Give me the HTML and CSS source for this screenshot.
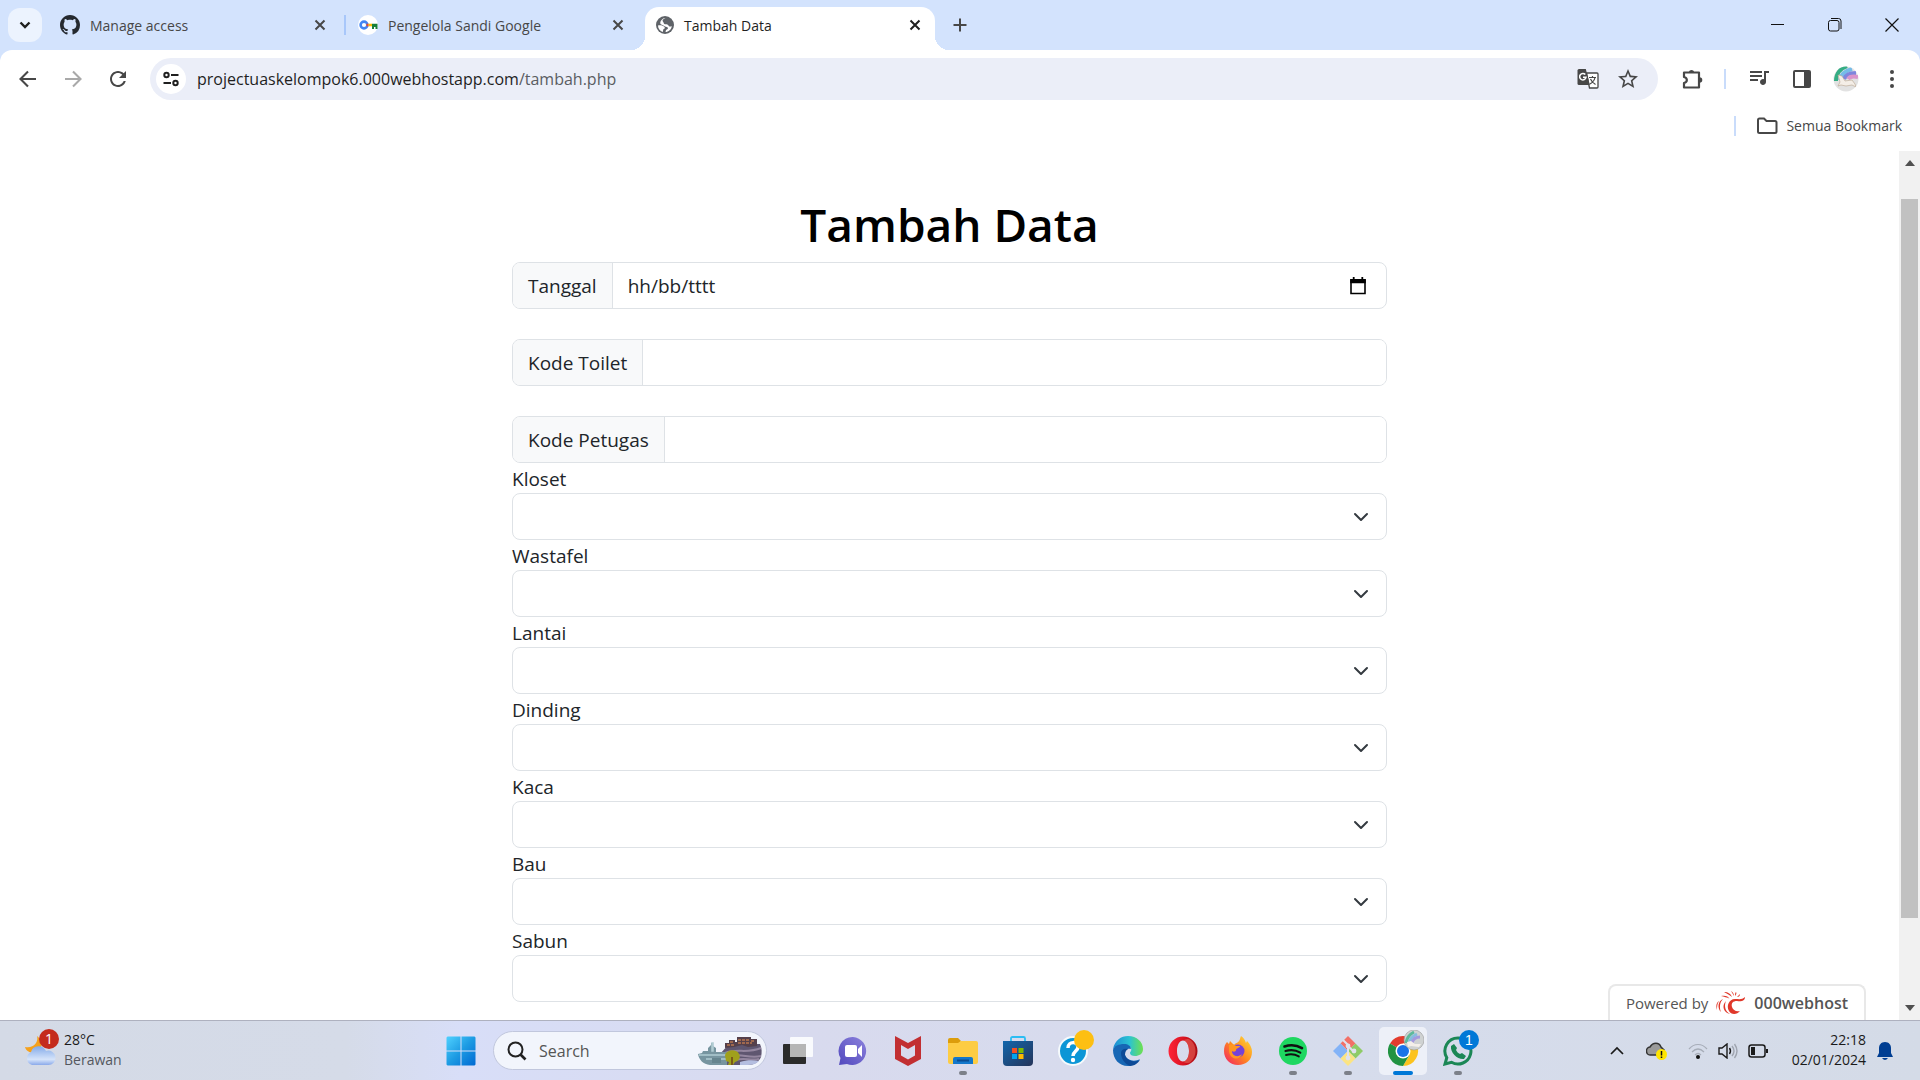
FILE: index.html
```html
<!DOCTYPE html>
<html lang="id">
<head>
<meta charset="utf-8">
<title>Tambah Data</title>
<link rel="stylesheet" href="styles.css">
</head>
<body>
<header class="browser">
  <div class="tabstrip">
    <button class="tab-search" aria-label="Cari tab"><svg width="12" height="8" viewBox="0 0 12 8"><path d="M1.500 1.500L6 6l4.500-4.500" fill="none" stroke="#1f1f1f" stroke-width="2.400"/></svg></button>
    <div class="tab tab-first">
      <svg width="20" height="20" viewBox="0 0 16 16"><path fill="#24292f" d="M8 0C3.580 0 0 3.580 0 8c0 3.540 2.290 6.530 5.470 7.590.4.070.55-.17.55-.38 0-.19-.01-.82-.01-1.490-2.010.37-2.530-.49-2.690-.94-.09-.23-.48-.94-.82-1.130-.28-.15-.68-.52-.01-.53.63-.01 1.080.58 1.230.82.72 1.210 1.870.87 2.330.66.070-.52.28-.87.51-1.070-1.780-.2-3.640-.89-3.640-3.950 0-.87.31-1.590.82-2.150-.08-.2-.36-1.020.08-2.120 0 0 .67-.21 2.200.82.64-.18 1.320-.27 2-.27s1.360.09 2 .27c1.530-1.040 2.200-.82 2.200-.82.44 1.100.16 1.920.08 2.120.51.56.82 1.270.82 2.150 0 3.070-1.870 3.750-3.650 3.950.29.25.54.73.54 1.480 0 1.070-.01 1.930-.01 2.200 0 .21.15.46.55.38A8.010 8.010 0 0 0 16 8c0-4.420-3.580-8-8-8z"/></svg>
      <span class="tab-title">Manage access</span>
      <button class="tab-close" aria-label="Tutup"><svg width="12" height="12" viewBox="0 0 12 12"><path d="M1.500 1.500l9 9M10.500 1.500l-9 9" stroke="#474747" stroke-width="2"/></svg></button>
    </div>
    <span class="tab-divider"></span>
    <div class="tab tab-second">
      <svg width="20" height="20" viewBox="0 0 20 20"><circle cx="10" cy="10" r="10" fill="#fff"/><circle cx="6" cy="10" r="3.400" fill="none" stroke="#4285f4" stroke-width="2.600"/><path d="M8.500 8.700h2v2.600h-2z" fill="#ea4335"/><path d="M10.500 8.700H14v2.600h-3.500z" fill="#fbbc04"/><path d="M14 8.700h5.500V14H17.500v-2H16v2h-2z" fill="#188038"/></svg>
      <span class="tab-title">Pengelola Sandi Google</span>
      <button class="tab-close" aria-label="Tutup"><svg width="12" height="12" viewBox="0 0 12 12"><path d="M1.500 1.500l9 9M10.500 1.500l-9 9" stroke="#474747" stroke-width="2"/></svg></button>
    </div>
    <div class="tab tab-active">
      <svg width="18" height="18" viewBox="0 0 18 18"><circle cx="9" cy="9" r="9" fill="#5f6368"/><path d="M2 9.500c2.500-.6 5 0 6.500 1.400.8.900.2 1.700-.8 2.100-.8.500-.4 2-1 2.900C4 15 2 12.700 2 9.500zM9.500 2c-.8.700-2.700 1.100-2.900 2.300-.2 1.300 1 1.500 1.100 2.600C7.800 8 9 8.500 10.200 8.300c1.700-.2 2 1.200 2.800 1.900.9.700 2.100.3 2.800-.2C15.500 13.500 12.500 16 9.500 16l.5-2c1.300-.5 2.500-1.300 1.700-2.500-.7-1-3.200-.6-3.900-1.700C7 8.700 4.500 9 4.300 7.500 4.200 5 6 2.200 9.500 2z" fill="#fff"/></svg>
      <span class="tab-title">Tambah Data</span>
      <button class="tab-close" aria-label="Tutup"><svg width="12" height="12" viewBox="0 0 12 12"><path d="M1.500 1.500l9 9M10.500 1.500l-9 9" stroke="#1f1f1f" stroke-width="2"/></svg></button>
    </div>
    <button class="new-tab" aria-label="Tab baru"><svg width="14" height="14" viewBox="0 0 14 14"><path d="M7 .5v13M.5 7h13" stroke="#474747" stroke-width="2"/></svg></button>
    <div class="window-controls">
      <button aria-label="Minimalkan"><svg width="14" height="14" viewBox="0 0 14 14"><path d="M0 6.500h13" stroke="#111"/></svg></button>
      <button aria-label="Pulihkan"><svg width="14" height="14" viewBox="0 0 14 14"><rect x=".5" y="2.500" width="10.500" height="10.500" rx="2" fill="none" stroke="#111"/><path d="M3 .5h7.500a2.500 2.500 0 0 1 2.500 2.500v8" fill="none" stroke="#111"/></svg></button>
      <button aria-label="Tutup jendela"><svg width="14" height="14" viewBox="0 0 14 14"><path d="M.5.5l13 13M13.500.5l-13 13" stroke="#111" stroke-width="1.200"/></svg></button>
    </div>
  </div>
  <div class="toolbar">
    <div class="nav-buttons">
      <button aria-label="Kembali"><svg width="24" height="24" viewBox="0 0 24 24"><path d="M20 12H5M12 4.500L4.500 12l7.500 7.500" fill="none" stroke="#474747" stroke-width="2.100"/></svg></button>
      <button aria-label="Maju"><svg width="24" height="24" viewBox="0 0 24 24"><path d="M4 12h15M12 4.500l7.500 7.500-7.500 7.500" fill="none" stroke="#a9a9a9" stroke-width="2.100"/></svg></button>
      <button aria-label="Muat ulang"><svg width="24" height="24" viewBox="0 0 24 24"><path fill="#474747" d="M17.650 6.350C16.200 4.900 14.210 4 12 4c-4.420 0-7.990 3.580-7.990 8s3.570 8 7.990 8c3.730 0 6.840-2.550 7.730-6h-2.080c-.82 2.330-3.040 4-5.650 4-3.310 0-6-2.690-6-6s2.690-6 6-6c1.660 0 3.140.69 4.220 1.780L13 11h7V4l-2.350 2.350z"/></svg></button>
    </div>
    <div class="omnibox">
      <button class="site-info" aria-label="Info situs"><svg width="16" height="16" viewBox="0 0 16 16" fill="none" stroke="#1f1f1f" stroke-width="2"><circle cx="3.500" cy="4" r="2.200"/><path d="M8 4h7.500M.5 12H8"/><circle cx="12.500" cy="12" r="2.200"/></svg></button>
      <span class="url">projectuaskelompok6.000webhostapp.com<span class="url-path">/tambah.php</span></span>
      <button aria-label="Terjemahkan"><svg width="22" height="22" viewBox="0 0 22 22"><path d="M9.500 5H20q1 0 1 1v13q0 1-1 1h-7.500z" fill="#fff" stroke="#474747" stroke-width="1.300"/><path d="M12 9.500h7M15.500 8v1.500M18 9.500c-.6 3-2.500 5-5 6.500M13.500 11c1 2.400 2.600 4 5 5.500" fill="none" stroke="#474747" stroke-width="1.200"/><path d="M2 1h6.800l4 16H2q-1.500 0-1.500-1.500v-13Q.5 1 2 1z" fill="#474747"/><path d="M8.300 6.600A3.200 3.200 0 1 0 9 9.300H6" fill="none" stroke="#fff" stroke-width="1.500"/></svg></button>
      <button aria-label="Bookmark"><svg width="24" height="24" viewBox="0 0 24 24"><path fill="#474747" d="M22 9.240l-7.190-.62L12 2 9.190 8.630 2 9.240l5.460 4.730L5.820 21 12 17.270 18.180 21l-1.630-7.030L22 9.240zM12 15.400l-3.760 2.270 1-4.280-3.320-2.880 4.380-.38L12 6.100l1.710 4.040 4.380.38-3.320 2.880 1 4.280L12 15.400z"/></svg></button>
    </div>
    <button class="extensions" aria-label="Ekstensi"><svg width="24" height="24" viewBox="0 0 24 24"><path d="M4 5.500h15v15H4v-4.500c3.800-1 3.800-5 0-6z" fill="none" stroke="#474747" stroke-width="2.200" stroke-linejoin="round"/><path d="M8.800 5a2.800 2.800 0 0 1 5.400 0zM19.500 10.200a2.800 2.800 0 0 1 0 5.600z" fill="#474747"/></svg></button>
    <span class="toolbar-divider"></span>
    <div class="toolbar-actions">
      <button aria-label="Kontrol media"><svg width="24" height="24" viewBox="0 0 24 24"><path fill="#474747" d="M15 4H3v2h12V4zm0 4H3v2h12V8zM3 14h8v-2H3v2zM17 4v8.180c-.31-.11-.65-.18-1-.18-1.660 0-3 1.340-3 3s1.340 3 3 3 3-1.340 3-3V6h3V4h-5z"/></svg></button>
      <button aria-label="Panel samping"><svg width="20" height="20" viewBox="0 0 20 20"><rect x="2" y="2" width="16" height="16" rx="1" fill="none" stroke="#474747" stroke-width="2"/><path d="M12 2h6v16h-6z" fill="#474747"/></svg></button>
      <button aria-label="Profil"><svg width="26" height="26" viewBox="0 0 26 26"><defs><clipPath id="av"><circle cx="13" cy="13" r="12.500"/></clipPath></defs><g clip-path="url(#av)"><path d="M0 0h26v26H0z" fill="#e2e2e2"/><g fill="none" stroke-width="4"><path d="M3 15C3 7 8 2 14 0" stroke="#35ad84"/><path d="M7 14c1-6 5-9 12-11" stroke="#76bce8"/><path d="M11 13c2-5 6-6 12-6" stroke="#7e86dd"/><path d="M15 13c2-3 5-3 10-2" stroke="#d995cb"/></g><path d="M5 9l4 1 3 5 7-1 3 4 1 3-4-2-6 1-5-1-3 1 2-4z" fill="#f4eee7" stroke="#b9a48f" stroke-width=".6"/></g></svg></button>
      <button aria-label="Menu"><svg width="24" height="24" viewBox="0 0 24 24" fill="#474747"><circle cx="12" cy="5" r="2"/><circle cx="12" cy="12" r="2"/><circle cx="12" cy="19" r="2"/></svg></button>
    </div>
  </div>
  <nav class="bookmarks">
    <span class="toolbar-divider"></span>
    <a class="bookmark" href="#"><svg width="22" height="18" viewBox="0 0 22 18"><path d="M2 3q0-1.500 1.500-1.500H8L10.500 4h8.500q1.500 0 1.500 1.500v9q0 1.500-1.500 1.500H3.500Q2 16 2 14.500z" fill="none" stroke="#474747" stroke-width="2"/></svg>Semua Bookmark</a>
  </nav>
</header>

<div class="viewport">
  <main class="page">
    <form class="entry-form">
      <h1>Tambah Data</h1>
      <div class="input-group">
        <label for="tanggal">Tanggal</label>
        <input id="tanggal" type="text" value="hh/bb/tttt">
        <button type="button" class="calendar" aria-label="Pilih tanggal"><svg width="20" height="20" viewBox="0 0 20 20"><path d="M3 4h14v13.500H3z" fill="none" stroke="#000" stroke-width="1.600"/><path d="M2.200 3h15.600v4.200H2.200zM4.800 1h1.800v3H4.800zM13.400 1h1.800v3h-1.800z"/></svg></button>
      </div>
      <div class="input-group">
        <label for="toilet">Kode Toilet</label>
        <input id="toilet" type="text">
      </div>
      <div class="input-group input-group-last">
        <label for="petugas">Kode Petugas</label>
        <input id="petugas" type="text">
      </div>
      <div class="field"><label for="kloset">Kloset</label><select id="kloset"></select></div>
      <div class="field"><label for="wastafel">Wastafel</label><select id="wastafel"></select></div>
      <div class="field"><label for="lantai">Lantai</label><select id="lantai"></select></div>
      <div class="field"><label for="dinding">Dinding</label><select id="dinding"></select></div>
      <div class="field"><label for="kaca">Kaca</label><select id="kaca"></select></div>
      <div class="field"><label for="bau">Bau</label><select id="bau"></select></div>
      <div class="field"><label for="sabun">Sabun</label><select id="sabun"></select></div>
    </form>
    <a class="powered" href="#">
      <span>Powered by</span>
      <svg width="30" height="26" viewBox="0 0 30 26" fill="#e0382a"><path d="M29 7c0 4-4 5-8 4-4 0-6 2-5 6 1 3 4 5 8 4-3 4-9 4-11 0-3-5 0-12 6-12 4 0 7 1 10-2z"/><path d="M10 11c-2 5-1 10 4 13-6-1-9-8-4-13zM7 9c-3 3-4 8-2 13C1 18 2 11 7 9zM3 11c-2 3-2 6-2 9-1-4-1-7 2-9zM5 6c4-1 7 0 9 3-3-2-6-2-9-3zM8 2c4 0 7 2 8 5-2-2-5-3-8-5zM15 1c2 1 3 3 3 5-1-2-2-3-3-5zM20 2c1 1 0 3-1 4 0-2 0-3 1-4zM24 4c0 2-1 3-3 3 1-1 2-2 3-3z"/></svg>
      <strong>000webhost</strong>
    </a>
  </main>
  <div class="scrollbar">
    <svg width="10" height="6" viewBox="0 0 10 6"><path d="M5 0l5 6H0z" fill="#505050"/></svg>
    <div class="track"><div class="thumb"></div></div>
    <svg width="10" height="6" viewBox="0 0 10 6"><path d="M5 6l5-6H0z" fill="#505050"/></svg>
  </div>
</div>

<footer class="taskbar">
  <div class="weather">
    <svg width="36" height="38" viewBox="0 0 36 38"><defs><linearGradient id="cl" x1="0" y1="0" x2="0" y2="1"><stop offset="0" stop-color="#82a9e8"/><stop offset=".7" stop-color="#d6e4fa"/><stop offset="1" stop-color="#8aa9ea"/></linearGradient></defs><path d="M13 7c2 6-4 13-12 11 1 5 8 7 12 5 6-3 6-12 0-16z" fill="#f5a11c"/><path d="M8 36a7 7 0 0 1-1-13 8 8 0 0 1 15-1 7.200 7.200 0 1 1 2 14z" fill="url(#cl)"/><circle cx="25" cy="10" r="10" fill="#c42b1c"/><text x="25" y="15" class="badge-text">1</text></svg>
    <div class="weather-text"><span>28°C</span><span class="muted">Berawan</span></div>
  </div>
  <div class="apps">
    <button class="app" aria-label="Mulai"><svg width="30" height="30" viewBox="0 0 30 30"><defs><linearGradient id="wn" x1="0" y1="0" x2="1" y2="1"><stop offset="0" stop-color="#4fd1ff"/><stop offset=".5" stop-color="#1d9be3"/><stop offset="1" stop-color="#0069d2"/></linearGradient></defs><path fill="url(#wn)" d="M1.500.5h13v14h-14v-13zM15.500.5h13l1 1v13h-14zM.5 15.500h14v14h-13l-1-1zM15.500 15.500h14v13l-1 1h-13z"/></svg></button>
    <div class="search">
      <svg width="20" height="20" viewBox="0 0 20 20" fill="none" stroke="#222"><circle cx="8.500" cy="8.500" r="7" stroke-width="2"/><path d="M13.500 13.500l5 5" stroke-width="2.600"/></svg>
      <input type="text" aria-label="Search" placeholder="Search">
      <svg width="64" height="30" viewBox="0 0 64 30"><path d="M19 20c5-3 8-9 14-12h29c2 4 2 9 1 13-2 5-7 8-13 8H28z" fill="#5f5670"/><path d="M27 17c12-5 22 1 36-5M30 21c12-5 20 2 33-1M38 24c8-3 14 1 23-1" stroke="#94869f" fill="none" stroke-width="2"/><path d="M42 26c6-2 13-2 19-1-3 3-7 4-11 4h-8z" fill="#b4bee0"/><path d="M27 12V7h4V4h6v2h2V1h14v2h6v7l-9 1-6-2-8 2z" fill="#55404b"/><path d="M29 9h8M40 4h11M40 7h14M53 5h4M32 6h4" stroke="#b87650" stroke-width="1.600" stroke-dasharray="3 1"/><path d="M0 18l4-1 1-2h5v-3l3-3V7h2v3l3 2v4h11v13H12C5 28 1 24 0 18z" fill="#7795a0"/><path d="M14 7h1v8h-1zM1 19h27M8 23h20" stroke="#b0cbd2" fill="#b0cbd2" stroke-width="1.600"/><path d="M14 22h9v5h-9z" fill="#66858f"/><path d="M27 19c2-6 12-6 14-1 2 3 0 7-4 8l-2 3h-5l1-3-3-1z" fill="#a0a01c"/><path d="M34 21v8" stroke="#7a5a18" stroke-width="2"/></svg>
    </div>
    <button class="app" aria-label="Tampilan tugas"><svg width="30" height="30" viewBox="0 0 30 30"><rect y="8" width="23" height="20" rx="1" fill="#2b2b2b"/><rect x="7" y="1" width="23" height="20" rx="1" fill="#fff" opacity=".85"/><path d="M7 8h16v13H7z" fill="#b5b5b5"/></svg></button>
    <button class="app" aria-label="Obrolan"><svg width="30" height="30" viewBox="0 0 30 30"><defs><linearGradient id="ch" x1="0" y1="1" x2="1" y2="0"><stop offset="0" stop-color="#5148be"/><stop offset="1" stop-color="#8c82dc"/></linearGradient></defs><path d="M15 1a14 14 0 1 1-6 27L1 29l1.500-7A14 14 0 0 1 15 1z" fill="url(#ch)"/><rect x="7" y="9" width="12" height="12" rx="2" fill="#fff"/><path d="M20 13l4-4v12l-4-4z" fill="#fff"/></svg></button>
    <button class="app" aria-label="McAfee"><svg width="30" height="30" viewBox="0 0 30 30"><path fill="#c22f32" d="M2 0l13 7 13-7v23l-13 7-13-7zm6 9v10.500l7 4 7-4V9l-7 4z"/></svg></button>
    <button class="app running" aria-label="File Explorer"><svg width="30" height="30" viewBox="0 0 30 30"><path d="M0 4q0-2 2-2h8l3 3-3 4H0z" fill="#dc9d0b"/><path d="M0 7h10l3-2h15q2 0 2 2v19q0 2-2 2H2q-2 0-2-2z" fill="#fdcc43"/><path d="M5 28v-5q0-2 2-2h16q2 0 2 2v5z" fill="#1377cb"/><path d="M9 24.500h12" stroke="#0a4c91" stroke-width="2"/></svg></button>
    <button class="app" aria-label="Microsoft Store"><svg width="30" height="30" viewBox="0 0 30 30"><defs><linearGradient id="st" x1="0" y1="0" x2="1" y2="1"><stop offset="0" stop-color="#1266ac"/><stop offset="1" stop-color="#253459"/></linearGradient></defs><path d="M8 7V2.500Q8 1 9.500 1h11Q22 1 22 2.500V7" fill="none" stroke="#2cbdf3" stroke-width="1.800"/><path d="M0 5h30v21q0 4-4 4H4q-4 0-4-4z" fill="url(#st)"/><path d="M9 12h5v5H9z" fill="#f25022"/><path d="M15.500 12h5v5h-5z" fill="#7fba00"/><path d="M9 18h5v5H9z" fill="#00a4ef"/><path d="M15.500 18h5v5h-5z" fill="#ffb900"/></svg></button>
    <button class="app" aria-label="Bantuan"><svg width="36" height="36" viewBox="0 0 36 36"><circle cx="15" cy="21" r="14" fill="#0c96d6" stroke="#f5fafc" stroke-width="2"/><path d="M10 18c0-7 10-7 10-1 0 4-5 4-5 9" fill="none" stroke="#fff" stroke-width="3.500"/><circle cx="15" cy="30" r="2.200" fill="#fff"/><circle cx="26" cy="10" r="10" fill="#fdbf12"/></svg></button>
    <button class="app" aria-label="Edge"><svg width="30" height="30" viewBox="0 0 30 30"><defs><linearGradient id="e1"><stop offset="0" stop-color="#1d8bd4"/><stop offset=".55" stop-color="#2bc3d2"/><stop offset="1" stop-color="#6fe14e"/></linearGradient></defs><path d="M0 13C2 4 8 0 15 0c9 0 15 6 15 13 0 5-4 7-8 7-3 0-5-1-5-3 0-1 2-2 1-5-1-2-4-3-7-3-5 0-9 2-11 4z" fill="url(#e1)"/><path d="M0 14c1-4 6-6 11-6 4 0 7 2 7 5-4-1-7 2-6 6 2 6 10 7 15 4-3 5-8 7-12 7C6 30 0 23 0 14z" fill="#1767b5"/><path d="M8 17c0 6 4 11 9 13 4 0 8-3 10-6-5 3-13 1-15-5 0-3 1-5 3-6-4-1-7 1-7 4z" fill="#0c4a97"/></svg></button>
    <button class="app" aria-label="Opera"><svg width="30" height="30" viewBox="0 0 30 30"><defs><linearGradient id="op"><stop offset="0" stop-color="#ff2338"/><stop offset=".6" stop-color="#d3121f"/><stop offset="1" stop-color="#a80d14"/></linearGradient></defs><path fill-rule="evenodd" fill="url(#op)" d="M15 .5a14.500 14.500 0 1 1 0 29 14.500 14.500 0 0 1 0-29zm0 4C11.500 4.500 9 9 9 15s2.500 10.500 6 10.500S21 21 21 15 18.500 4.500 15 4.500z"/><path d="M15 4.500c3-2 6-2 8 0 6 5 6 16 0 21-2 2-5 2-8 0 3.500 0 6-4.500 6-10.500S18.500 4.500 15 4.500z" fill="#e0574f" opacity=".7"/></svg></button>
    <button class="app" aria-label="Firefox"><svg width="30" height="30" viewBox="0 0 30 30"><defs><linearGradient id="ff" x1="1" y1="0" x2="0" y2="1"><stop offset="0" stop-color="#ffe13a"/><stop offset=".5" stop-color="#ff8a1e"/><stop offset="1" stop-color="#f2196b"/></linearGradient></defs><path d="M18 0c3 2 4 4 5 7l1-2c4 4 5 8 5 11 0 8-6 13-14 13S1 23 1 15c0-4 1-7 3-9l2 2 1-3 4 4c1-2 4-2 5-4 1-1 1-3 2-5z" fill="url(#ff)"/><circle cx="15" cy="15" r="6.500" fill="#7542d8"/><path d="M6 9c4-1 6 0 7 1h4c0 2-4 2-4 4 0 2-3 2-4 1 0 5 6 7 10 3-2 7-13 6-13-4z" fill="#ff9720"/></svg></button>
    <button class="app running" aria-label="Spotify"><svg width="30" height="30" viewBox="0 0 30 30"><circle cx="15" cy="15" r="14" fill="#1ed760"/><g fill="none" stroke="#111" stroke-linecap="round"><path d="M6.500 10.500c6-2 12.500-1.300 17.500 1.700" stroke-width="2.600"/><path d="M7.500 15c5-1.500 10.500-1 14.800 1.600" stroke-width="2.200"/><path d="M8 19c4.500-1.200 9-.8 12.800 1.400" stroke-width="1.900"/></g></svg></button>
    <button class="app running" aria-label="Git"><svg width="30" height="30" viewBox="0 0 30 30"><path d="M15 0l7.500 7.500L15 15 7.500 7.500z" fill="#f27067"/><path d="M7.500 7.500L15 15l-7.500 7.500L0 15z" fill="#83b3f7"/><path d="M22.500 7.500L30 15l-7.500 7.500L15 15z" fill="#8ecb67"/><path d="M15 15l7.500 7.500L15 30l-7.500-7.500z" fill="#fbe483"/><path d="M10 4l5 5v14M15 10l5 5" fill="none" stroke="#dfe2ee" stroke-width="2"/><g fill="#dfe2ee"><circle cx="15" cy="10" r="2.400"/><circle cx="21" cy="15" r="2.400"/><circle cx="15" cy="22" r="2.400"/></g></svg></button>
    <button class="app running active" aria-label="Chrome"><svg width="36" height="36" viewBox="0 0 36 36"><path d="M15 21L2 13.500A15 15 0 0 1 28 13.500H15z" fill="#e33b2e"/><path d="M15 21V13.500h13A15 15 0 0 1 15 36l6.500-11z" fill="#fcc31e"/><path d="M15 21l6.500 3.800L15 36A15 15 0 0 1 2 13.500z" fill="#229342"/><circle cx="15" cy="21" r="7.500" fill="#fff"/><circle cx="15" cy="21" r="6" fill="#1a73e8"/><circle cx="26" cy="10" r="10" fill="#cfd2d2" stroke="#999" stroke-width=".6"/><g fill="none" stroke-width="3"><path d="M18 13c1-6 4-9 8-11" stroke="#5cb99b"/><path d="M21 13c1-5 4-7 8-9" stroke="#86bce0"/><path d="M24 13c1-4 4-6 8-6" stroke="#a49add"/></g><path d="M19 12l4-1 4 3h6l-2 3-8-1-3 1z" fill="#f4efe9"/></svg></button>
    <button class="app running" aria-label="WhatsApp"><svg width="36" height="36" viewBox="0 0 36 36"><path d="M15 8a13 13 0 1 1-6.500 24.300L2 34l1.800-6.300A13 13 0 0 1 15 8z" fill="none" stroke="#1b8755" stroke-width="3"/><path d="M8 16l3-2 3 4-1 2c1 2 2 3 4 4l2-1 4 3-2 3C15 30 7 23 8 16z" fill="#1b8755"/><circle cx="26" cy="10" r="10" fill="#0078d7"/><text x="26" y="15" class="badge-text">1</text></svg></button>
  </div>
  <div class="tray">
    <button aria-label="Ikon tersembunyi"><svg width="14" height="9" viewBox="0 0 14 9"><path d="M1 8l6-6 6 6" fill="none" stroke="#1a1a1a" stroke-width="1.700"/></svg></button>
    <button aria-label="OneDrive"><svg width="22" height="20" viewBox="0 0 22 20"><path d="M5 14a4 4 0 0 1-1-8C7 1 13 1 15 6l3 3-5 5z" fill="#9a9a9a" stroke="#333" stroke-width="1.500"/><circle cx="15.500" cy="13.500" r="5.500" fill="#ffe500"/><path d="M15.500 10v4.500M15.500 15.500V17" stroke="#111" stroke-width="1.500"/></svg></button>
    <div class="status">
      <svg width="20" height="16" viewBox="0 0 20 16" fill="none" stroke="#a7adb8" stroke-width="1.200"><path d="M1 6c5-6 13-6 18 0M4 9c4-4 8-4 12 0M7 12c2-2 4-2 6 0"/><circle cx="10" cy="14" r="2" fill="#111" stroke="none"/></svg>
      <svg width="20" height="16" viewBox="0 0 20 16" fill="none" stroke="#1a1a1a" stroke-width="1.400"><path d="M1 5h3l5-4v14l-5-4H1z"/><path d="M11.500 5q2 3 0 6"/><path d="M14 3q4 5 0 10M16.500 1q5 7 0 14" stroke="#a0a5b0"/></svg>
      <svg width="20" height="14" viewBox="0 0 20 14"><rect x="1" y="1" width="16" height="12" rx="2.500" fill="none" stroke="#1a1a1a" stroke-width="1.500"/><path d="M3 3h4v8H3zM18 5h2v4h-2z" fill="#1a1a1a"/></svg>
    </div>
    <div class="clock"><span>22:18</span><span>02/01/2024</span></div>
    <button aria-label="Notifikasi"><svg width="18" height="20" viewBox="0 0 18 20"><path d="M9 1c4 0 6 3 6 6v5l2 4H1l2-4V7c0-3 2-6 6-6zM6 17h6q-3 4-6 0z" fill="#003e92"/></svg></button>
  </div>
</footer>
</body>
</html>
```

FILE: styles.css
```css
* { box-sizing: border-box; }
body {
  margin: 0;
  height: 100vh;
  display: flex;
  flex-direction: column;
  overflow: hidden;
  background: #fff;
  color: #212529;
  font-family: "Open Sans", "Noto Sans", sans-serif;
}
button {
  display: flex;
  align-items: center;
  justify-content: center;
  padding: 0;
  border: 0;
  background: none;
}
svg { display: block; flex: none; }

/* Browser tabs */
.browser { flex: none; background: #d3e3fd; }
.tabstrip {
  display: flex;
  align-items: center;
  height: 50px;
  padding-left: 8px;
  font-size: 14px;
  color: #474747;
}
.tab-search { width: 34px; height: 34px; border-radius: 12px; background: #ecf3fe; }
.tab { display: flex; align-items: center; gap: 10px; }
.tab-first { width: 284px; margin-left: 18px; }
.tab-second { width: 287px; padding-left: 12px; }
.tab-divider { width: 2px; height: 20px; background: #a8c7fa; }
.tab-title { flex: 1; white-space: nowrap; }
.tab-close { width: 20px; height: 20px; margin-right: 14px; }
.tab-second .tab-close { margin-right: 5px; }
.tab-active {
  position: relative;
  align-self: flex-end;
  width: 290px;
  height: 43px;
  margin-left: 12px;
  padding: 0 0 7px 11px;
  border-radius: 14px 14px 0 0;
  background: #fff;
  color: #1f1f1f;
}
.tab-active .tab-close { margin-right: 10px; }
.tab-active::before, .tab-active::after {
  content: "";
  position: absolute;
  bottom: 0;
  width: 14px;
  height: 14px;
}
.tab-active::before { right: 100%; background: radial-gradient(circle at 0 0, transparent 14px, #fff 14px); }
.tab-active::after { left: 100%; background: radial-gradient(circle at 100% 0, transparent 14px, #fff 14px); }
.new-tab { width: 34px; height: 34px; margin-left: 8px; }
.window-controls { display: flex; margin-left: auto; }
.window-controls button { width: 57px; height: 50px; }

/* Address bar */
.toolbar {
  display: flex;
  align-items: center;
  height: 58px;
  padding: 0 16px 0 5px;
  border-radius: 12px 12px 0 0;
  background: #fff;
}
.nav-buttons { display: flex; }
.nav-buttons button { width: 45px; height: 40px; }
.omnibox {
  flex: 1;
  display: flex;
  align-items: center;
  gap: 17px;
  height: 42px;
  margin-left: 10px;
  padding: 0 18px 0 6px;
  border-radius: 21px;
  background: #ebeef8;
}
.site-info { width: 30px; height: 30px; border-radius: 15px; background: #fff; }
.url { flex: 1; margin-left: -6px; font-size: 16px; color: #1f1f1f; }
.url-path { color: #5a5d62; }
.extensions { margin: 0 20px 0 22px; }
.toolbar-divider { width: 2px; height: 20px; background: #c9dcfb; }
.toolbar-actions { display: flex; align-items: center; gap: 21px; margin-left: 21px; }
.bookmarks {
  display: flex;
  align-items: center;
  justify-content: flex-end;
  gap: 20px;
  height: 43px;
  padding: 0 18px 8px 0;
  background: #fff;
}
.bookmark {
  display: flex;
  align-items: center;
  gap: 8px;
  font-size: 14px;
  color: #474747;
  text-decoration: none;
}

/* Web page */
.viewport { flex: 1; min-height: 0; display: flex; }
.page { position: relative; flex: 1; overflow: hidden; }
.entry-form { width: 875px; max-width: 100%; margin: 0 auto; padding-top: 43px; font-size: 19px; line-height: 30px; }
h1 {
  margin: 0 0 8px;
  font-size: 46px;
  line-height: 60px;
  font-weight: 600;
  text-align: center;
  color: #000;
}
.input-group {
  display: flex;
  height: 47px;
  margin-bottom: 30px;
  border: 1px solid #dee2e6;
  border-radius: 8px;
  overflow: hidden;
}
.input-group-last { margin-bottom: 0; }
.input-group label { padding: 8px 15px; border-right: 1px solid #dee2e6; background: #f8f9fa; }
.input-group input { flex: 1; min-width: 0; padding: 0 15px; border: 0; outline: 0; font: inherit; color: inherit; background: #fff; }
.calendar { width: 56px; }
.field { display: flex; flex-direction: column; }
.field label { height: 30px; line-height: 32px; }
.field select {
  height: 47px;
  border: 1px solid #dee2e6;
  border-radius: 8px;
  appearance: none;
  background: #fff url("data:image/svg+xml,%3Csvg xmlns='http://www.w3.org/2000/svg' viewBox='0 0 16 16'%3E%3Cpath fill='none' stroke='%23343a40' stroke-linecap='round' stroke-linejoin='round' stroke-width='2' d='m2 5 6 6 6-6'/%3E%3C/svg%3E") no-repeat right 17px center / 16px 16px;
}
.powered {
  position: absolute;
  right: 33px;
  bottom: 0;
  display: flex;
  align-items: center;
  justify-content: center;
  gap: 8px;
  width: 258px;
  height: 36px;
  border: 2px solid #e8e8e8;
  border-bottom: 0;
  border-radius: 8px 8px 0 0;
  background: #fff;
  font-size: 15px;
  color: #555;
  text-decoration: none;
}
.powered strong { font-weight: 600; font-size: 16px; }
.scrollbar {
  display: flex;
  flex-direction: column;
  align-items: center;
  width: 21px;
  padding: 9px 0;
  background: #f1f1f1;
}
.track { flex: 1; width: 17px; padding: 33px 0 87px; }
.thumb { height: 100%; background: #c1c1c1; }

/* Windows taskbar */
.taskbar {
  flex: none;
  display: flex;
  align-items: center;
  height: 60px;
  border-top: 1px solid #aeb1bf;
  background: linear-gradient(90deg, #d4dae6 0, #d5dbe8 18%, #d8def8 24%, #d8daee 42%, #d6dcec 70%, #d4dbe7 100%);
  color: #1a1a1a;
  font-size: 14px;
  line-height: 20px;
}
.weather { flex: 1; display: flex; align-items: center; gap: 4px; padding: 0 0 6px 24px; }
.weather-text { display: flex; flex-direction: column; padding-top: 4px; }
.muted { color: #55585f; }
.badge-text { font-size: 14px; fill: #fff; text-anchor: middle; }
.apps { display: flex; align-items: center; height: 100%; }
.app { position: relative; width: 55px; height: 48px; border-radius: 5px; }
.app svg[width="36"] { margin: -6px -6px 0 0; }
.active { width: 48px; margin: 0 3px 0 4px; background: #edf0f8; }
.running::after {
  content: "";
  position: absolute;
  left: calc(50% - 4px);
  bottom: 0;
  width: 8px;
  height: 4px;
  border-radius: 2px;
  background: #7c8089;
}
.active::after { left: calc(50% - 10px); width: 20px; background: #0078d7; }
.search {
  display: flex;
  align-items: center;
  gap: 12px;
  width: 274px;
  height: 39px;
  margin: 0 3px 0 5px;
  padding: 0 4px 0 13px;
  border: 1px solid #c1c7dd;
  border-radius: 20px;
  background: #f2f5fc;
}
.search input { flex: 1; min-width: 0; padding: 0; border: 0; outline: 0; background: none; font: inherit; font-size: 16px; }
.search input::placeholder { color: #555; opacity: 1; }
.tray { flex: 1; display: flex; align-items: center; justify-content: flex-end; gap: 20px; padding-right: 26px; }
.tray button:first-child { margin-right: 2px; }
.status { display: flex; align-items: center; gap: 10px; margin-right: 4px; }
.clock { display: flex; flex-direction: column; padding-bottom: 2px; text-align: right; }
.tray button:last-child { margin-left: -10px; }
```
